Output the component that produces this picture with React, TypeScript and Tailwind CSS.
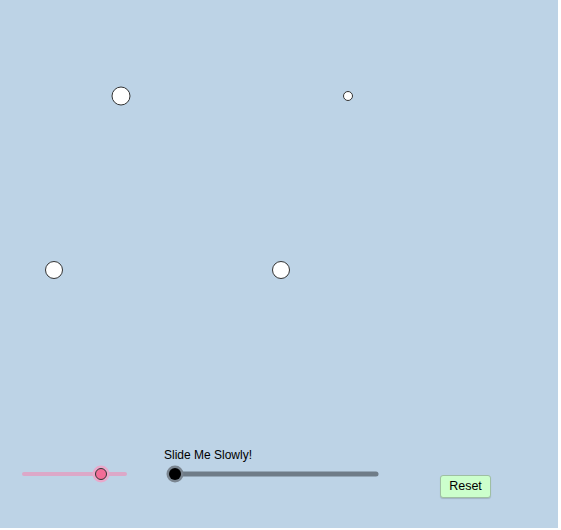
export default function App() {
  const points = [
    { x: 121, y: 96, r: 9 },
    { x: 348, y: 96, r: 4.5 },
    { x: 54, y: 270, r: 8.5 },
    { x: 281, y: 270, r: 8.5 },
  ];

  return (
    <div className="relative w-[558px] h-[528px] bg-[#bdd3e6] font-['Liberation_Sans',Arial,sans-serif] overflow-hidden">
      <svg className="absolute inset-0" width="558" height="528">
        {points.map((p, i) => (
          <circle
            key={i}
            cx={p.x}
            cy={p.y}
            r={p.r}
            fill="#ffffff"
            stroke="#333333"
            strokeWidth="1"
          />
        ))}

        {/* pink slider */}
        <line x1="24" y1="474" x2="125" y2="474" stroke="#dca8c8" strokeWidth="4" strokeLinecap="round" />
        <circle cx="101" cy="474" r="8.5" fill="#e9a9cb" />
        <circle cx="101" cy="474" r="5.5" fill="#f36d97" stroke="#333333" strokeWidth="1" />

        {/* black slider */}
        <line x1="176" y1="474" x2="376" y2="474" stroke="#6f7c88" strokeWidth="5" strokeLinecap="round" />
        <circle cx="175" cy="474" r="8.5" fill="#7a8590" />
        <circle cx="175" cy="474" r="6" fill="#000000" />
      </svg>

      <div className="absolute left-[164px] top-[448px] text-[12px] leading-[14px] text-black">
        Slide Me Slowly!
      </div>

      <button className="absolute left-[440px] top-[475px] w-[51px] h-[23px] rounded-[3px] border border-[#9fbfa3] bg-[#ccffcc] text-[12.5px] text-black shadow-[0_1px_1px_rgba(0,0,0,0.15)]">
        Reset
      </button>
    </div>
  );
}
